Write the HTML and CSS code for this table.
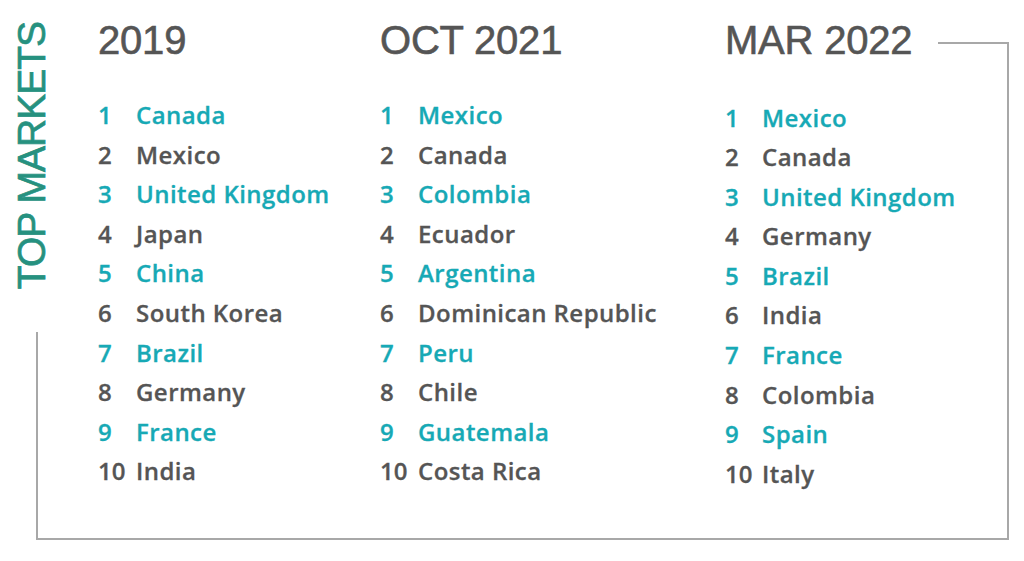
FILE: index.html
```html
<!DOCTYPE html>
<html lang="en">
<head>
<meta charset="utf-8">
<title>Top Markets</title>
<link rel="stylesheet" href="styles.css">
</head>
<body>
<div class="page">
  <div class="frame"></div>
  <div class="side"><span class="side-title">TOP MARKETS</span></div>
  <div class="cols">
    <section class="col">
      <h2 class="year">2019</h2>
      <ol class="list">
        <li class="row hl"><span class="num">1</span><span class="name">Canada</span></li>
        <li class="row"><span class="num">2</span><span class="name">Mexico</span></li>
        <li class="row hl"><span class="num">3</span><span class="name">United Kingdom</span></li>
        <li class="row"><span class="num">4</span><span class="name">Japan</span></li>
        <li class="row hl"><span class="num">5</span><span class="name">China</span></li>
        <li class="row"><span class="num">6</span><span class="name">South Korea</span></li>
        <li class="row hl"><span class="num">7</span><span class="name">Brazil</span></li>
        <li class="row"><span class="num">8</span><span class="name">Germany</span></li>
        <li class="row hl"><span class="num">9</span><span class="name">France</span></li>
        <li class="row"><span class="num">10</span><span class="name">India</span></li>
      </ol>
    </section>
    <section class="col">
      <h2 class="year">OCT 2021</h2>
      <ol class="list">
        <li class="row hl"><span class="num">1</span><span class="name">Mexico</span></li>
        <li class="row"><span class="num">2</span><span class="name">Canada</span></li>
        <li class="row hl"><span class="num">3</span><span class="name">Colombia</span></li>
        <li class="row"><span class="num">4</span><span class="name">Ecuador</span></li>
        <li class="row hl"><span class="num">5</span><span class="name">Argentina</span></li>
        <li class="row"><span class="num">6</span><span class="name">Dominican Republic</span></li>
        <li class="row hl"><span class="num">7</span><span class="name">Peru</span></li>
        <li class="row"><span class="num">8</span><span class="name">Chile</span></li>
        <li class="row hl"><span class="num">9</span><span class="name">Guatemala</span></li>
        <li class="row"><span class="num">10</span><span class="name">Costa Rica</span></li>
      </ol>
    </section>
    <section class="col col-last">
      <h2 class="year">MAR 2022</h2>
      <ol class="list">
        <li class="row hl"><span class="num">1</span><span class="name">Mexico</span></li>
        <li class="row"><span class="num">2</span><span class="name">Canada</span></li>
        <li class="row hl"><span class="num">3</span><span class="name">United Kingdom</span></li>
        <li class="row"><span class="num">4</span><span class="name">Germany</span></li>
        <li class="row hl"><span class="num">5</span><span class="name">Brazil</span></li>
        <li class="row"><span class="num">6</span><span class="name">India</span></li>
        <li class="row hl"><span class="num">7</span><span class="name">France</span></li>
        <li class="row"><span class="num">8</span><span class="name">Colombia</span></li>
        <li class="row hl"><span class="num">9</span><span class="name">Spain</span></li>
        <li class="row"><span class="num">10</span><span class="name">Italy</span></li>
      </ol>
    </section>
  </div>
</div>
</body>
</html>
```

FILE: styles.css
```css
* { box-sizing: border-box; }
html, body { margin: 0; padding: 0; background: #ffffff; }
.page {
  position: relative;
  width: 1024px;
  height: 561px;
  display: flex;
  align-items: flex-start;
  padding: 20px 0 0 16px;
  overflow: hidden;
}
.frame {
  position: absolute;
  left: 36px;
  top: 42px;
  width: 973px;
  height: 498px;
  border-right: 2px solid #a8a8a8;
  border-bottom: 2px solid #a8a8a8;
  pointer-events: none;
}
.frame::before {
  content: "";
  position: absolute;
  right: 0;
  top: 0;
  width: 69px;
  border-top: 2px solid #a8a8a8;
}
.frame::after {
  content: "";
  position: absolute;
  left: 0;
  bottom: 0;
  height: 206px;
  border-left: 2px solid #a8a8a8;
}
.side {
  width: 31px;
  margin-top: 2px;
  writing-mode: vertical-rl;
  transform: rotate(180deg);
  font-family: "Liberation Sans", Arial, sans-serif;
  font-size: 39px;
  line-height: 31px;
  letter-spacing: -1px;
  color: #26917f;
  -webkit-text-stroke: 0.7px #26917f;
  white-space: nowrap;
}
.cols {
  display: grid;
  grid-template-columns: 282px 345px auto;
  margin-left: 51px;
}
.year {
  margin: 0;
  font-family: "Liberation Sans", Arial, sans-serif;
  font-weight: 400;
  font-size: 40px;
  line-height: 40px;
  color: #555555;
  -webkit-text-stroke: 0.6px #555555;
  letter-spacing: -0.2px;
}
.list {
  list-style: none;
  margin: 35px 0 0 0;
  padding: 0;
  font-family: "Open Sans", "Noto Sans", sans-serif;
  font-weight: 600;
  font-size: 24px;
  line-height: 39.6px;
  letter-spacing: 0.45px;
  color: #555555;
  -webkit-text-stroke: 0.3px currentColor;
}
.col-last .list { margin-top: 37.5px; }
.row { display: flex; }
.row.hl { color: #17a9b5; }
.num { min-width: 38px; letter-spacing: 0; }
.col-last .num { min-width: 37px; }
```
